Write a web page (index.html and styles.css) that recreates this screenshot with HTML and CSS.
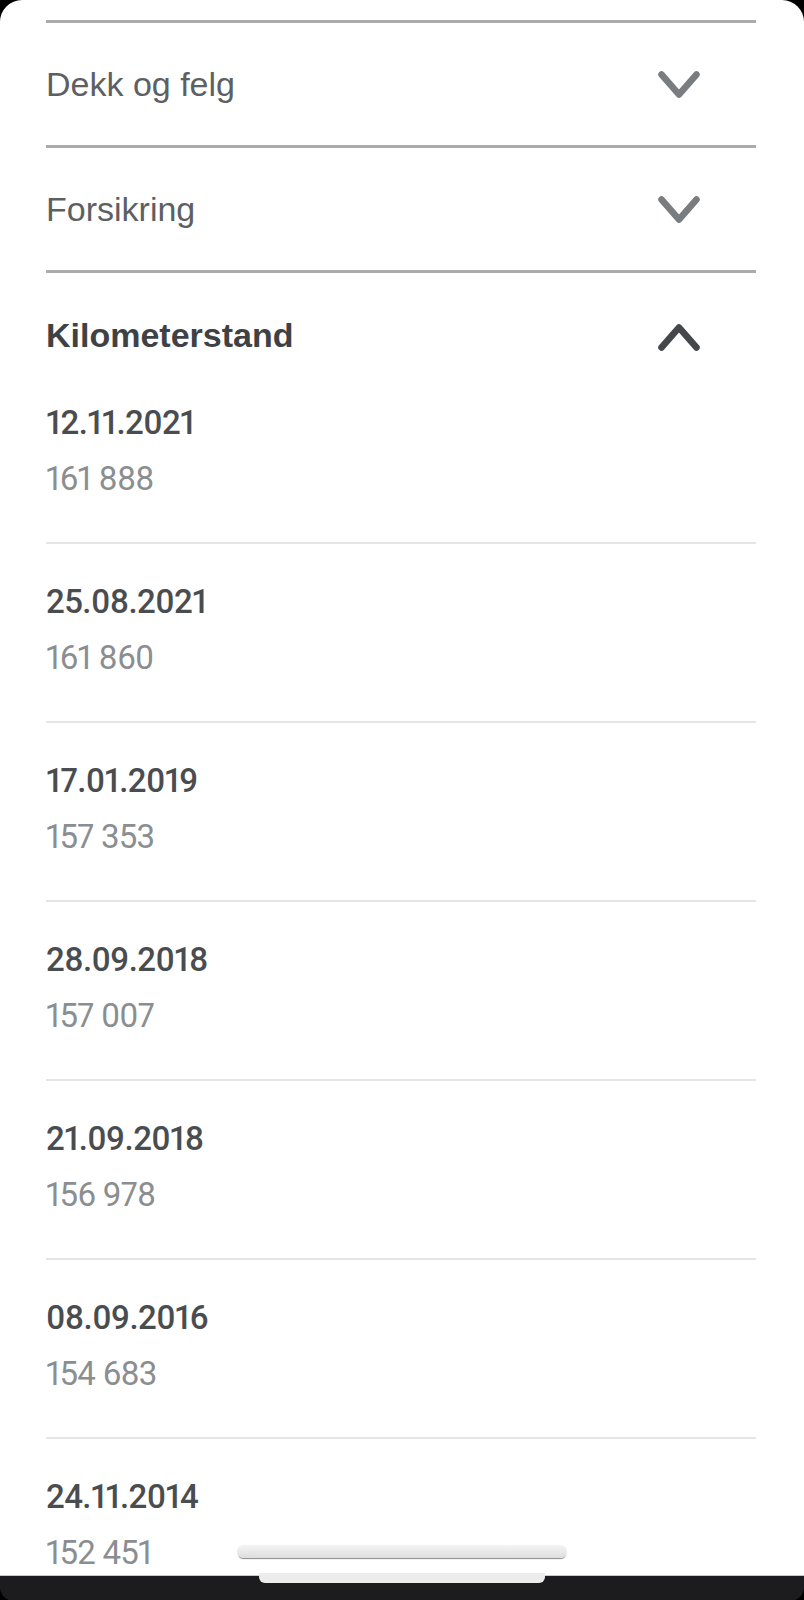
FILE: index.html
```html
<!DOCTYPE html>
<html lang="no">
<head>
    <meta charset="UTF-8">
    <title>Kilometerstand</title>
    <link rel="stylesheet" href="styles.css">
</head>
<body>
    <div class="sheet">
        <div class="section">
            <div class="section-head">
                <span>Dekk og felg</span>
                <svg class="chevron" viewBox="0 0 42 27"><path d="M3.5 3.5 L21 23.5 L38.5 3.5"/></svg>
            </div>
        </div>
        <div class="section">
            <div class="section-head">
                <span>Forsikring</span>
                <svg class="chevron" viewBox="0 0 42 27"><path d="M3.5 3.5 L21 23.5 L38.5 3.5"/></svg>
            </div>
        </div>
        <div class="section open">
            <div class="section-head">
                <span>Kilometerstand</span>
                <svg class="chevron" viewBox="0 0 42 27"><path d="M3.5 23.5 L21 3.5 L38.5 23.5"/></svg>
            </div>
            <ul class="readings">
                <li><div class="date">12.11.2021</div><div class="km">161 888</div></li>
                <li><div class="date">25.08.2021</div><div class="km">161 860</div></li>
                <li><div class="date">17.01.2019</div><div class="km">157 353</div></li>
                <li><div class="date">28.09.2018</div><div class="km">157 007</div></li>
                <li><div class="date">21.09.2018</div><div class="km">156 978</div></li>
                <li><div class="date">08.09.2016</div><div class="km">154 683</div></li>
                <li><div class="date">24.11.2014</div><div class="km">152 451</div></li>
            </ul>
        </div>
    </div>
    <div class="bottom-bar"></div>
    <div class="home-pill"></div>
    <div class="home-pill-low"></div>
</body>
</html>
```

FILE: styles.css
```css
body, html {
    margin: 0;
    padding: 0;
    height: 1600px;
    overflow: hidden;
    background-color: #000;
    font-family: "Liberation Sans", Arial, sans-serif;
}
.sheet {
    position: relative;
    height: 1575px;
    overflow: hidden;
    box-sizing: border-box;
    padding: 20px 48px 0 46px;
    background-color: #fff;
    border-radius: 22px 22px 0 0;
}
.section {
    border-top: 3px solid #a9abad;
}
.section-head {
    display: flex;
    align-items: center;
    justify-content: space-between;
    height: 122px;
    font-size: 34px;
    color: #5d6063;
}
.chevron {
    width: 42px;
    height: 27px;
    margin-right: 56px;
    fill: none;
    stroke: #7a7d80;
    stroke-width: 6.5;
    stroke-linecap: round;
    stroke-linejoin: round;
}
.open .section-head {
    height: 40px;
    padding: 42px 0 10px;
    font-weight: bold;
    color: #3f4245;
}
.open .chevron {
    stroke: #45484b;
    margin-top: 4px;
}
.readings {
    list-style: none;
    margin: 0;
    padding: 0;
}
.readings li {
    padding: 38px 0 43px;
    border-bottom: 2px solid #e4e5e6;
}
.readings li:last-child {
    border-bottom: none;
}
.date {
    height: 40px;
    line-height: 40px;
    font-family: Roboto, "Liberation Sans", sans-serif;
    font-size: 33px;
    font-weight: 500;
    letter-spacing: -0.6px;
    font-variant-numeric: proportional-nums;
    color: #4a4d50;
}
.km {
    height: 40px;
    line-height: 40px;
    margin-top: 16px;
    font-family: Roboto, "Liberation Sans", sans-serif;
    font-size: 33px;
    letter-spacing: -0.8px;
    font-variant-numeric: proportional-nums;
    color: #8b8e91;
}
.bottom-bar {
    height: 25px;
    background-color: #1c1c1f;
    border-top: 1px solid #c9c9c9;
    border-radius: 0 0 14px 14px;
}
/* overlay pills from the phone's home indicator */
.home-pill {
    position: absolute;
    left: 237px;
    top: 1545px;
    width: 330px;
    height: 13px;
    border-radius: 7px;
    background: linear-gradient(#f4f4f4, #dedede);
    box-shadow: 0 2px 1px -1px #8a8a8a;
}
.home-pill-low {
    position: absolute;
    left: 259px;
    top: 1573px;
    width: 286px;
    height: 10px;
    border-radius: 0 0 6px 6px;
    background-color: #ececec;
}
```
